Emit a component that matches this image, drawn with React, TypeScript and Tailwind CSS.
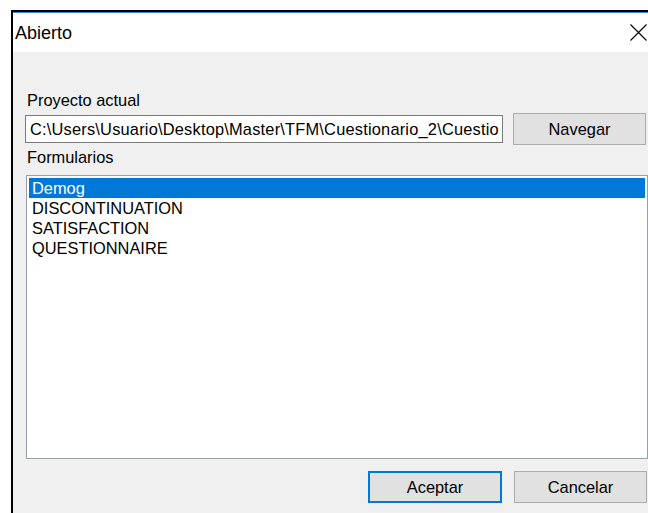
const fuente = { fontFamily: '"Liberation Sans", Arial, sans-serif' }

const formularios = ["Demog", "DISCONTINUATION", "SATISFACTION", "QUESTIONNAIRE"]

function CloseIcon() {
    return (
        <svg width="17" height="17" viewBox="0 0 17 17" className="block">
            <path d="M0.5 0.5 L16.5 16.5 M16.5 0.5 L0.5 16.5" stroke="#000" strokeWidth="1.1" fill="none" />
        </svg>
    )
}

function Boton({ label, focused }: { label: string; focused?: boolean }) {
    return (
        <button
            className={
                focused
                    ? "h-[32px] w-[134px] bg-[#e1e1e1] border-2 border-[#0078d7] text-[16.4px] text-black"
                    : "h-[32px] w-[133px] bg-[#e1e1e1] border border-[#adadad] text-[16.4px] text-black"
            }
            style={fuente}
        >
            {label}
        </button>
    )
}

export default function App() {
    return (
        <div className="w-[648px] h-[513px] bg-white overflow-hidden" style={fuente}>
            <div className="ml-[11px] mt-[10px] h-[503px] border-l-2 border-t-2 border-black flex flex-col">
                <div className="h-[1px] bg-[#3c8fd8]" />

                {/* barra de título */}
                <div className="h-[39px] bg-white flex items-center justify-between pl-[2px] pr-[1px]">
                    <span className="text-[18px] text-black leading-none">Abierto</span>
                    <CloseIcon />
                </div>

                <div className="flex-1 bg-[#f0f0f0] pl-[12px] pt-[38px] flex flex-col">
                    <div className="ml-[2px] h-[20px] leading-[20px] text-[16.4px] text-black">Proyecto actual</div>

                    <div className="mt-[3px] h-[32px] flex items-center">
                        <div className="w-[478px] h-[28px] bg-white border border-[#7a7a7a] overflow-hidden whitespace-nowrap pl-[4px] leading-[26px] text-[16.4px] tracking-[0.2px] text-black">
                            C:\Users\Usuario\Desktop\Master\TFM\Cuestionario_2\Cuestio
                        </div>
                        <div className="ml-[10px]">
                            <Boton label="Navegar" />
                        </div>
                    </div>

                    <div className="mt-[2px] ml-[2px] h-[20px] leading-[20px] text-[16.4px] text-black">Formularios</div>

                    <div className="mt-[8px] ml-[1px] w-[622px] h-[284px] bg-white border border-[#9a9ea6] p-[2px]">
                        {formularios.map((f, i) => (
                            <div
                                key={f}
                                className={
                                    i === 0
                                        ? "h-[20px] leading-[20px] pl-[3px] text-[16.4px] bg-[#0078d7] text-white"
                                        : "h-[20px] leading-[20px] pl-[3px] text-[16.4px] text-black"
                                }
                            >
                                {f}
                            </div>
                        ))}
                    </div>

                    <div className="mt-[12px] flex justify-end gap-[12px] pr-[1px]">
                        <Boton label="Aceptar" focused />
                        <Boton label="Cancelar" />
                    </div>
                </div>
            </div>
        </div>
    )
}
